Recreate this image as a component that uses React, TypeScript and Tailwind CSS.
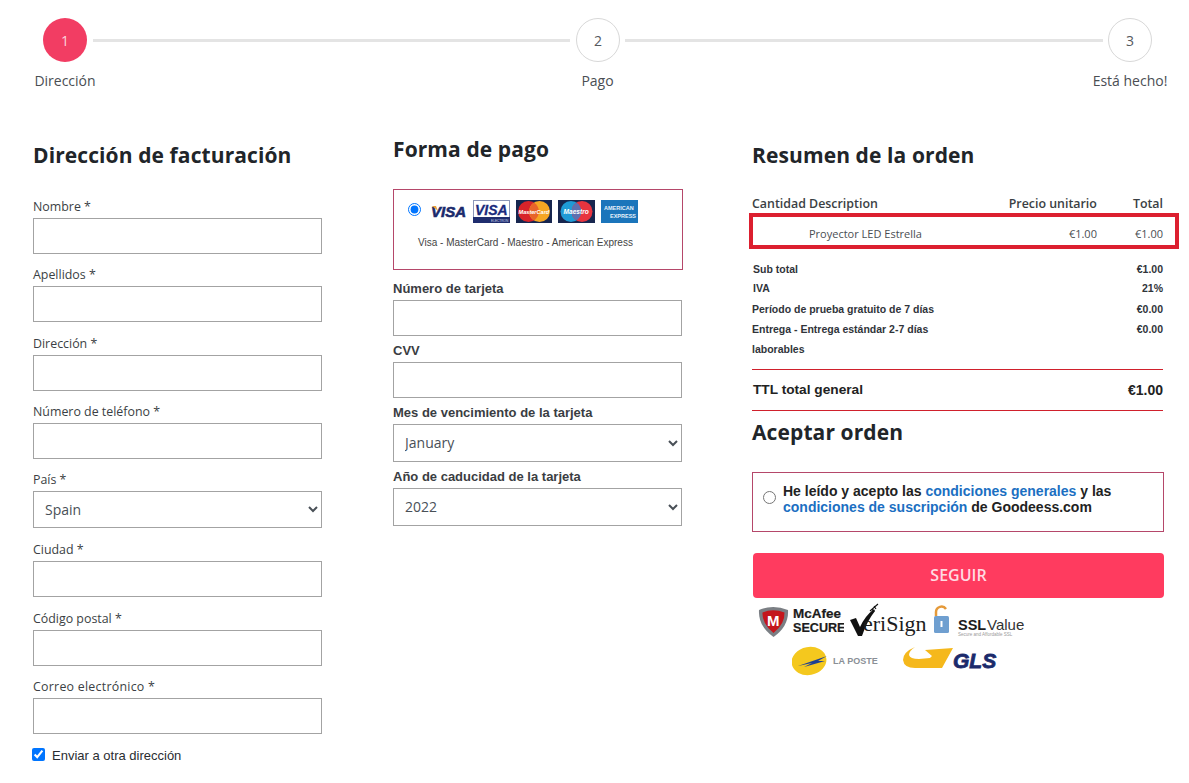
import React from 'react';

const openSans = "font-['Open_Sans',sans-serif]";
const arial = "font-['Liberation_Sans',Arial,sans-serif]";

const Heading: React.FC<{ children: React.ReactNode; className?: string }> = ({ children, className = '' }) => (
  <h2 className={`${openSans} text-[21px] leading-[30px] font-bold tracking-[0.1px] text-[#212529] ${className}`}>{children}</h2>
);

const Field: React.FC<{ label: string; select?: string; labelClass?: string }> = ({ label, select, labelClass = '' }) => (
  <div className={select ? 'mb-[11.3px]' : 'mb-[10.3px]'}>
    <label className={`${openSans} block h-[22px] text-[12.4px] leading-[22px] text-[#3b3f44] ${labelClass}`}>{label}</label>
    {select ? (
      <SelectBox value={select} className="h-[37px]" />
    ) : (
      <input className="block h-[36px] w-[289px] border border-[#a3a3a3] bg-white" />
    )}
  </div>
);

const SelectBox: React.FC<{ value: string; className?: string }> = ({ value, className = '' }) => (
  <select
    defaultValue={value}
    className={`${openSans} block w-[289px] border border-[#a3a3a3] bg-white pl-[7px] text-[14px] font-normal text-[#495057] ${className}`}
  >
    <option>{value}</option>
  </select>
);

const Step: React.FC<{ n: number; active?: boolean }> = ({ n, active }) => (
  <div
    className={`flex h-[44px] w-[44px] shrink-0 items-center justify-center rounded-full text-[14px] ${openSans} ${
      active ? 'bg-[#f23d63] text-[#fbd5dd]' : 'border border-[#d8d8d8] bg-white text-[#55595e]'
    }`}
  >
    {n}
  </div>
);

const VisaPlain = () => (
  <svg width="36" height="18" viewBox="0 0 36 18">
    <text x="0" y="14" fontFamily="Liberation Sans" fontWeight="700" fontStyle="italic" fontSize="15" fill="#1a2a6c" stroke="#1a2a6c" strokeWidth="0.6">VISA</text>
    <path d="M1 3 L5 3 L7 8 Z" fill="#e9a13b" />
  </svg>
);

const VisaElectron = () => (
  <svg width="37" height="23" viewBox="0 0 37 23">
    <rect width="37" height="23" fill="#fff" />
    <rect x="0.5" y="0.5" width="36" height="22" fill="none" stroke="#8c96b8" />
    <rect y="17" width="37" height="6" fill="#1f2d6e" />
    <text x="2" y="14.5" fontFamily="Liberation Sans" fontWeight="700" fontStyle="italic" fontSize="14" fill="#1a2a7c" stroke="#1a2a7c" strokeWidth="0.3">VISA</text>
    <text x="18" y="22" fontFamily="Liberation Sans" fontSize="3.2" fill="#cfd6ee">ELECTRON</text>
  </svg>
);

const MasterCard = () => (
  <svg width="36" height="23" viewBox="0 0 36 23">
    <rect width="36" height="23" fill="#17264f" />
    <circle cx="12.5" cy="11.5" r="10.5" fill="#d8232a" />
    <circle cx="23.5" cy="11.5" r="10.5" fill="#f5a623" />
    <path d="M18 2.6 A10.5 10.5 0 0 1 18 20.4 A10.5 10.5 0 0 1 18 2.6 Z" fill="#e8642a" />
    <text x="2.5" y="13.5" fontFamily="Liberation Sans" fontWeight="700" fontStyle="italic" fontSize="5.6" fill="#fff">MasterCard</text>
  </svg>
);

const Maestro = () => (
  <svg width="37" height="23" viewBox="0 0 37 23">
    <rect width="37" height="23" fill="#17264f" />
    <circle cx="13" cy="11.5" r="10.5" fill="#1f9ad6" />
    <circle cx="24" cy="11.5" r="10.5" fill="#e8343f" />
    <path d="M18.5 2.6 A10.5 10.5 0 0 1 18.5 20.4 A10.5 10.5 0 0 1 18.5 2.6 Z" fill="#5e6fb0" />
    <text x="5.5" y="13.5" fontFamily="Liberation Sans" fontWeight="700" fontStyle="italic" fontSize="6.6" fill="#fff">Maestro</text>
  </svg>
);

const Amex = () => (
  <svg width="37" height="23" viewBox="0 0 37 23">
    <rect width="37" height="23" fill="#1b75bb" />
    <text x="3" y="10" fontFamily="Liberation Sans" fontWeight="700" fontSize="5.5" fill="#e6f1fa">AMERICAN</text>
    <text x="9" y="18" fontFamily="Liberation Sans" fontWeight="700" fontSize="5.5" fill="#e6f1fa">EXPRESS</text>
  </svg>
);

const McAfee = () => (
  <svg width="86" height="36" viewBox="0 0 86 36">
    <path d="M1 7 Q15 1 30 7 Q31 23 15.500 34 Q0 23 1 7 Z" fill="#7b7f84" />
    <path d="M4.500 9.500 Q15 5 26.500 9.500 Q27 21 15.500 30 Q4 21 4.500 9.500 Z" fill="#c4161c" />
    <text x="9" y="23" fontFamily="Liberation Sans" fontWeight="700" fontSize="15" fill="#fff">M</text>
    <text x="35" y="15" fontFamily="Liberation Sans" fontWeight="700" fontSize="13.500" fill="#1c1c1c" stroke="#1c1c1c" strokeWidth="0.2">McAfee</text>
    <text x="35" y="29" fontFamily="Liberation Sans" fontWeight="700" fontSize="12.600" fill="#1c1c1c" stroke="#1c1c1c" strokeWidth="0.2">SECURE</text>
  </svg>
);

const VeriSign = () => (
  <svg width="78" height="36" viewBox="0 0 78 36">
    <path d="M0 17 L6 15 L10 24 Q15 13 24 6 L25 8 Q17 18 12 33 L8 33 Z" fill="#111" />
    <path d="M20 8 L28 1 M22 6 L24 9 M24 3 L26 6" stroke="#111" strokeWidth="1.100" />
    <text x="13" y="28" fontFamily="Liberation Serif" fontSize="22" fill="#1c1c1c">eriSign</text>
  </svg>
);

const SslValue = () => (
  <svg width="96" height="36" viewBox="0 0 96 36">
    <path d="M2 13 V9 A5.500 5.500 0 0 1 12 6" fill="none" stroke="#e59a3a" strokeWidth="2.500" />
    <rect x="0" y="13" width="15" height="17" rx="1.500" fill="#6f9fd0" />
    <rect x="6.500" y="18" width="2" height="6" fill="#fff" />
    <text x="24" y="27" fontFamily="Liberation Sans" fontWeight="700" fontSize="14.500" fill="#1b1b1b">SSL</text>
    <text x="53" y="27" fontFamily="Liberation Sans" fontSize="15" fill="#333">Value</text>
    <text x="24" y="33" fontFamily="Liberation Sans" fontSize="4.500" fill="#9a9a9a">Secure and Affordable SSL</text>
  </svg>
);

const LaPoste = () => (
  <svg width="90" height="30" viewBox="0 0 90 30">
    <ellipse cx="17" cy="15" rx="17.500" ry="14" transform="rotate(-10 17 15)" fill="#f4c81e" />
    <path d="M6 20 L35 10 L26 15 L33 15 L12 21 L20 17 Z" fill="#1c3f94" />
    <text x="41" y="18" fontFamily="Liberation Sans" fontWeight="700" fontSize="9" fill="#8a8f96">LA POSTE</text>
  </svg>
);

const Gls = () => (
  <svg width="94" height="30" viewBox="0 0 94 30">
    <path d="M12 1 Q0 6 0 14 Q1 22 12 22 L39 22 L50 2 L22 4 L29 10 L27 12 L16 13 Q7 13 6 9 Q6 5 12 1 Z" fill="#f5b81c" />
    <text x="50" y="22" fontFamily="Liberation Sans" fontWeight="700" fontStyle="italic" fontSize="21" fill="#1b2a6b" stroke="#1b2a6b" strokeWidth="0.8">GLS</text>
  </svg>
);

const TotalRow: React.FC<{ label: string; value?: string; className?: string }> = ({ label, value, className = 'h-[20px]' }) => (
  <div className={`flex items-center justify-between pt-[2px] ${arial} text-[10.5px] font-semibold text-[#30343a] ${className}`}>
    <span>{label}</span>
    <span>{value}</span>
  </div>
);

export default function App() {
  return (
    <div className="h-[783px] w-[1189px] overflow-hidden bg-white">
      {/* stepper */}
      <div className="pt-[18px]">
        <div className="ml-[43px] flex items-center">
          <Step n={1} active />
          <div className="ml-[6px] mr-[6px] h-[3px] w-[477px] bg-[#e4e4e4]" />
          <Step n={2} />
          <div className="mx-[5px] h-[3px] w-[478px] bg-[#e4e4e4]" />
          <Step n={3} />
        </div>
        <div className={`mt-[9px] flex justify-between pl-[15px] pr-[9px] ${openSans} text-[14px] leading-[20px] text-[#4a4e53]`}>
          <span className="w-[100px] text-center">Dirección</span>
          <span className="w-[100px] text-center">Pago</span>
          <span className="w-[100px] text-center">Está hecho!</span>
        </div>
      </div>

      <div className="mt-[49px] flex pl-[33px]">
        {/* billing */}
        <div className="w-[289px]">
          <Heading>Dirección de facturación</Heading>
          <div className="mt-[26px]">
            <Field label="Nombre *" />
            <Field label="Apellidos *" />
            <Field label="Dirección *" />
            <Field label="Número de teléfono *" />
            <Field label="País *" select="Spain" />
            <Field label="Ciudad *" />
            <Field label="Código postal *" />
            <Field label="Correo electrónico *" labelClass="tracking-[0.25px]" />
          </div>
          <label className={`mt-[3px] -ml-[1px] flex items-start gap-[7px] ${arial} text-[13px] leading-[18px] text-[#2a2d31]`}>
            <input type="checkbox" defaultChecked className="m-0 mt-[4px] h-[13px] w-[13px]" />
            <span className="pt-[3px]">Enviar a otra dirección</span>
          </label>
        </div>

        {/* payment */}
        <div className="-mt-[6px] ml-[71px] w-[290px]">
          <Heading>Forma de pago</Heading>
          <div className="mt-[25px] h-[81px] border border-[#b5476a] pl-[14px] pt-[10px]">
            <div className="flex items-center">
              <input type="radio" name="pay" defaultChecked className="m-0 mb-[5px] h-[13px] w-[13px]" />
              <div className="ml-[10px] flex items-center gap-[6px]">
                <VisaPlain />
                <VisaElectron />
                <MasterCard />
                <Maestro />
                <Amex />
              </div>
            </div>
            <p className={`ml-[10px] mt-[14px] ${arial} text-[10px] leading-[12px] text-[#444]`}>
              Visa - MasterCard - Maestro - American Express
            </p>
          </div>
          <div className={`mt-[9px] ${arial} text-[13px] font-bold text-[#3a3d42]`}>
            <div className="h-[21px] leading-[20px]">Número de tarjeta</div>
            <input className="block h-[36px] w-[289px] border border-[#a3a3a3]" />
            <div className="mt-[5px] h-[21px] leading-[20px]">CVV</div>
            <input className="block h-[36px] w-[289px] border border-[#a3a3a3]" />
            <div className="mt-[5px] h-[21px] leading-[20px]">Mes de vencimiento de la tarjeta</div>
            <SelectBox value="January" className="h-[38px] pb-[2px]" />
            <div className="mt-[5px] h-[21px] leading-[20px]">Año de caducidad de la tarjeta</div>
            <SelectBox value="2022" className="h-[38px] pb-[2px]" />
          </div>
        </div>

        {/* summary */}
        <div className="ml-[69px] w-[412px]">
          <Heading>Resumen de la orden</Heading>
          <div className={`mt-[23px] flex h-[20px] items-center pt-[2px] ${openSans} text-[12.4px] font-semibold text-[#3b3f44]`}>
            <span>Cantidad Description</span>
            <span className="ml-auto mr-[36px]">Precio unitario</span>
            <span className="mr-[1px]">Total</span>
          </div>
          <div className={`relative flex h-[36px] items-center pt-[7px] ${openSans} text-[11px] text-[#4a4e53]`}>
            <span className="ml-[57px]">Proyector LED Estrella</span>
            <span className="ml-auto mr-[38px]">€1.00</span>
            <span className="mr-[1px]">€1.00</span>
            <div className="absolute -left-[3px] -right-[15px] top-0 bottom-0 border-[4px] border-[#dc1f2f]" />
          </div>
          <div className="mt-[10px] w-[411px] pl-[1px]">
            <TotalRow label="Sub total" value="€1.00" />
            <TotalRow label="IVA" value="21%" className="mb-[2px] h-[18px]" />
            <TotalRow label="Período de prueba gratuito de 7 días" value="€0.00" className="-ml-[1px] h-[20px]" />
            <TotalRow label="Entrega - Entrega estándar 2-7 días" value="€0.00" className="-ml-[1px] h-[20px]" />
            <TotalRow label="laborables" className="-ml-[1px] h-[20px]" />
            <div className="mt-[10px] -ml-[1px] flex h-[42px] items-center justify-between border-y border-[#d0202c] pl-[1px]">
              <span className={`${arial} text-[13.7px] font-bold text-[#222]`}>TTL total general</span>
              <span className={`${arial} text-[14px] font-bold text-[#222]`}>€1.00</span>
            </div>
          </div>
          <Heading className="mt-[6px]">Aceptar orden</Heading>
          <div className="mt-[25px] flex h-[60px] w-[412px] items-center border border-[#b5476a] pb-[10px] pl-[10px]">
            <input type="radio" name="terms" className="m-0 h-[13px] w-[13px]" />
            <p className={`ml-[7px] mt-[4px] ${arial} text-[14px] leading-[16px] font-semibold text-[#222]`}>
              He leído y acepto las <a className="text-[#1b6fc2]">condiciones generales</a> y las{' '}
              <a className="text-[#1b6fc2]">condiciones de suscripción</a> de Goodeess.com
            </p>
          </div>
          <button className={`mt-[21px] ml-[1px] block h-[45px] w-[411px] rounded-[4px] bg-[#ff3b5f] pb-[2px] ${openSans} text-[16px] font-semibold text-[#ffdbe2]`}>
            SEGUIR
          </button>
          <div className="mt-[5px] ml-[6px] flex items-start gap-[6px]">
            <McAfee />
            <VeriSign />
            <SslValue />
          </div>
          <div className="mt-[7px] ml-[40px] flex items-start gap-[21px]">
            <LaPoste />
            <Gls />
          </div>
        </div>
      </div>
    </div>
  );
}
